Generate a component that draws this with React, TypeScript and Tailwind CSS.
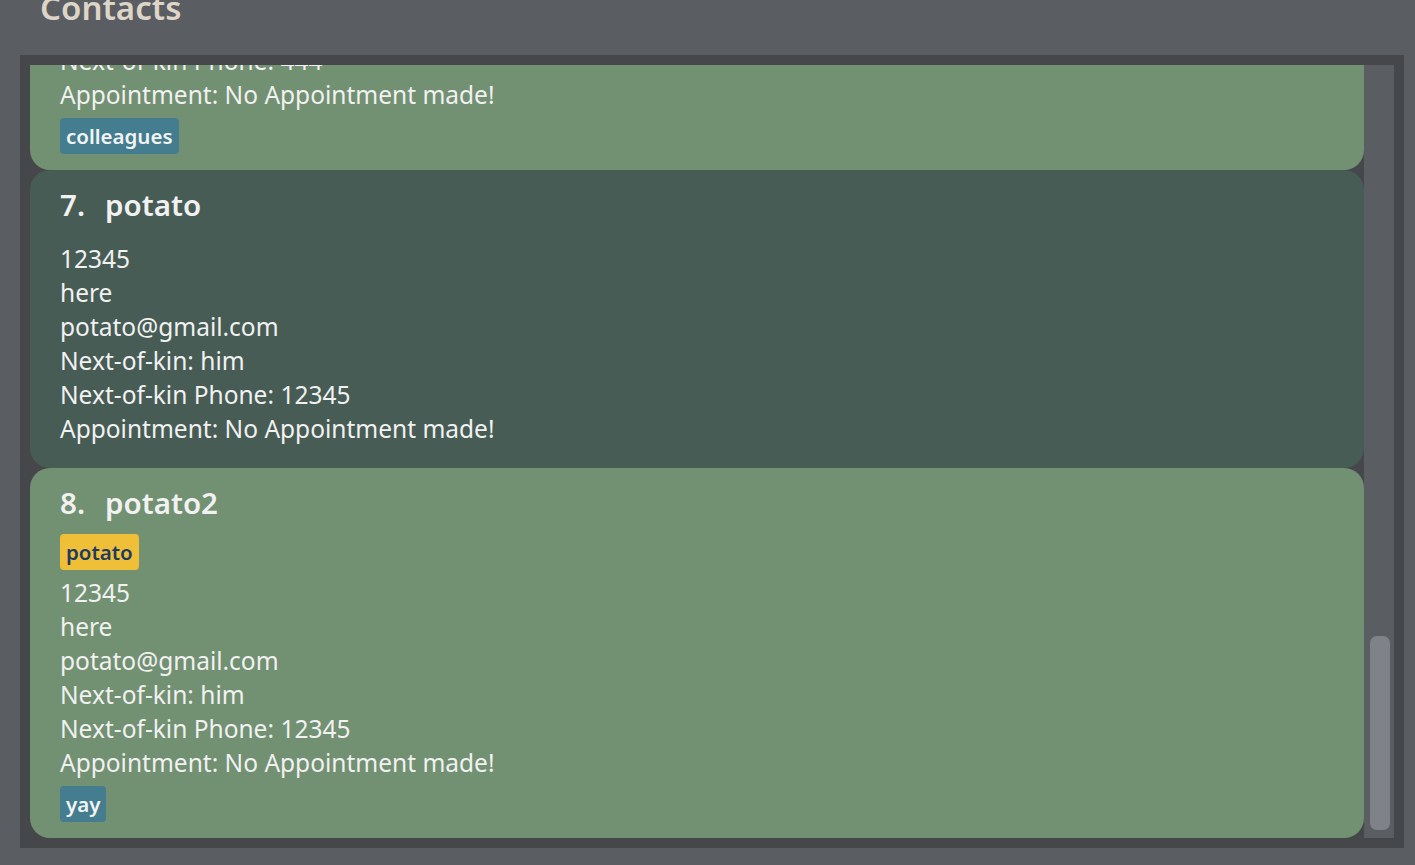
const font = { fontFamily: '"Noto Sans", "Open Sans", sans-serif' };

type Person = {
  index: number;
  name: string;
  phone: string;
  address: string;
  email: string;
  kin: string;
  kinPhone: string;
  appointment: string;
  topTags: string[];
  tags: string[];
  dark?: boolean;
};

const people: Person[] = [
  {
    index: 6,
    name: "Roy Balakrishnan",
    phone: "92624417",
    address: "Blk 45 Aljunied Street 85, #11-31",
    email: "royb@example.com",
    kin: "Ann",
    kinPhone: "444",
    appointment: "No Appointment made!",
    topTags: [],
    tags: ["colleagues"],
  },
  {
    index: 7,
    name: "potato",
    phone: "12345",
    address: "here",
    email: "potato@gmail.com",
    kin: "him",
    kinPhone: "12345",
    appointment: "No Appointment made!",
    topTags: [],
    tags: [],
    dark: true,
  },
  {
    index: 8,
    name: "potato2",
    phone: "12345",
    address: "here",
    email: "potato@gmail.com",
    kin: "him",
    kinPhone: "12345",
    appointment: "No Appointment made!",
    topTags: ["potato"],
    tags: ["yay"],
  },
];

function Card({ p }: { p: Person }) {
  return (
    <div
      className={`rounded-[20px] pl-[30px] pt-[15px] pb-[16px] text-[#f1f1f1] ${
        p.dark ? "bg-[#475c55]" : "bg-[#729072]"
      }`}
    >
      <div className="flex h-[40px] items-center text-[29.5px] font-semibold leading-[40px]">
        <span className="w-[45px]">{p.index}.</span>
        <span>{p.name}</span>
      </div>
      <div className="mt-[11px] flex gap-2">
        {p.topTags.map((t) => (
          <span
            key={t}
            className="flex h-[36px] items-center rounded-[4px] bg-[#f0bf38] px-[6px] text-[20.5px] font-semibold text-[#1d3a63]"
          >
            {t}
          </span>
        ))}
      </div>
      <div className="mt-[6px] text-[24.5px] leading-[34px]">
        <div>{p.phone}</div>
        <div>{p.address}</div>
        <div>{p.email}</div>
        <div>Next-of-kin: {p.kin}</div>
        <div>Next-of-kin Phone: {p.kinPhone}</div>
        <div>Appointment: {p.appointment}</div>
      </div>
      <div className="mt-[6px] flex gap-2">
        {p.tags.map((t) => (
          <span
            key={t}
            className="flex h-[36px] items-center rounded-[4px] bg-[#437d8f] px-[6px] text-[20.5px] font-semibold text-[#f4f4f4]"
          >
            {t}
          </span>
        ))}
      </div>
    </div>
  );
}

export default function App() {
  return (
    <div className="h-[865px] w-[1415px] overflow-hidden bg-[#5a5d62]" style={font}>
      <div className="h-[55px] overflow-hidden pl-[40px]">
        <div className="-mt-[17px] text-[33px] font-semibold text-[#ddd5c7]">Contacts</div>
      </div>
      <div className="ml-[20px] flex h-[793px] w-[1384px] bg-[#46474b] p-[10px]">
        <div className="h-full flex-1 overflow-hidden">
          <div className="-mt-[229px]">
            {people.map((p) => (
              <Card key={p.index} p={p} />
            ))}
          </div>
        </div>
        <div className="relative h-full w-[30px] bg-[#5a5d62]">
          <div className="absolute left-[6px] top-[571px] h-[194px] w-[20px] rounded-[7px] bg-[#7f8288]" />
        </div>
      </div>
    </div>
  );
}
